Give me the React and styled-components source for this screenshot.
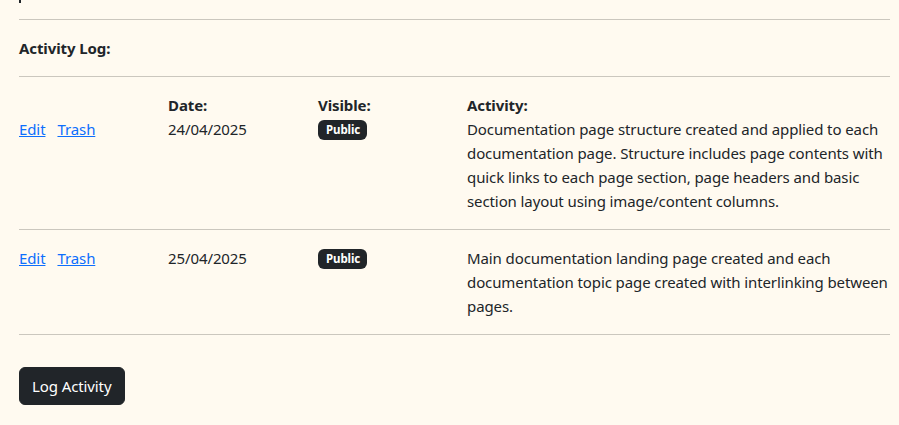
import React from "react";
import styled, { createGlobalStyle } from "styled-components";

const Global = createGlobalStyle`
  html, body { margin: 0; padding: 0; background: #fffaf0; }
  body {
    font-family: "Noto Sans", "Open Sans", sans-serif;
    font-size: 15px;
    line-height: 24px;
    letter-spacing: -0.1px;
    color: #212529;
  }
`;

const Page = styled.div`
  padding: 0 9px 0 19px;
`;

const Fragment = styled.div`
  height: 19px;
  position: relative;
  &::before {
    content: "";
    position: absolute;
    left: 0;
    top: 0;
    width: 2px;
    height: 3px;
    background: #212529;
  }
`;

const SectionTitle = styled.div`
  border-top: 1px solid #cbc7be;
  padding: 16px 0;
  font-weight: 700;
`;

const Row = styled.div`
  display: grid;
  grid-template-columns: 149px 150px 149px 1fr;
  border-top: 1px solid #cbc7be;
  padding: 16px 0;
  &:last-of-type { border-bottom: 1px solid #cbc7be; }
`;

const Cell = styled.div`
  padding-right: ${(p) => (p.$last ? "0" : "8px")};
`;

const Label = styled.div`
  font-weight: 700;
  min-height: 24px;
`;

const Actions = styled.div`
  display: flex;
  gap: 12px;
`;

const Link = styled.a`
  color: #0d6efd;
  text-decoration: underline;
  cursor: pointer;
`;

const Badge = styled.span`
  display: inline-block;
  background: #212529;
  color: #fff;
  font-size: 11.5px;
  font-weight: 700;
  line-height: 1;
  padding: 4px 7px 4px 8px;
  border-radius: 6px;
  vertical-align: 1px;
`;

const Button = styled.button`
  margin-top: 32px;
  background: #212529;
  color: #fff;
  border: 1px solid #212529;
  border-radius: 6px;
  padding: 6px 12px;
  font-family: inherit;
  font-size: 15px;
  line-height: 24px;
  letter-spacing: inherit;
  cursor: pointer;
`;

const entries = [
  {
    labels: true,
    date: "24/04/2025",
    visible: "Public",
    activity:
      "Documentation page structure created and applied to each documentation page. Structure includes page contents with quick links to each page section, page headers and basic section layout using image/content columns.",
  },
  {
    labels: false,
    date: "25/04/2025",
    visible: "Public",
    activity:
      "Main documentation landing page created and each documentation topic page created with interlinking between pages.",
  },
];

export default function App() {
  return (
    <>
      <Global />
      <Page>
        <Fragment />
        <SectionTitle>Activity Log:</SectionTitle>
        <div>
          {entries.map((e, i) => (
            <Row key={i}>
              <Cell>
                {e.labels && <Label />}
                <Actions>
                  <Link>Edit</Link>
                  <Link>Trash</Link>
                </Actions>
              </Cell>
              <Cell>
                {e.labels && <Label>Date:</Label>}
                {e.date}
              </Cell>
              <Cell>
                {e.labels && <Label>Visible:</Label>}
                <Badge>{e.visible}</Badge>
              </Cell>
              <Cell $last>
                {e.labels && <Label>Activity:</Label>}
                {e.activity}
              </Cell>
            </Row>
          ))}
        </div>
        <Button>Log Activity</Button>
      </Page>
    </>
  );
}
